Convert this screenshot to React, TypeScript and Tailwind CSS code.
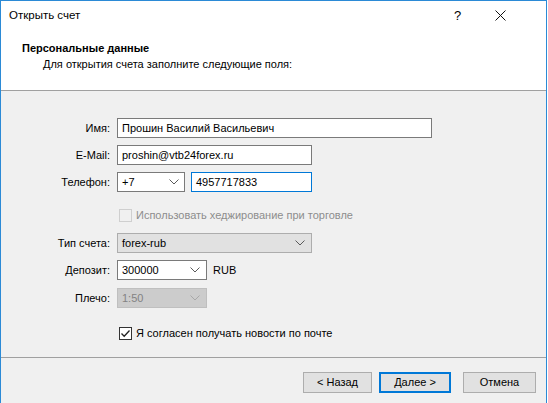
import React from 'react';

const font = { fontFamily: '"Liberation Sans", Arial, sans-serif' };

function Chevron({ color = '#5a5a5a' }: { color?: string }) {
  return (
    <svg width="10" height="6" viewBox="0 0 10 6" className="shrink-0">
      <polyline points="0.5,0.5 5,5 9.5,0.5" fill="none" stroke={color} strokeWidth="1" />
    </svg>
  );
}

function Label({ children }: { children: React.ReactNode }) {
  return <div className="w-[110px] shrink-0 pr-[1px] text-right">{children}</div>;
}

function Check({ checked, disabled }: { checked?: boolean; disabled?: boolean }) {
  return (
    <div
      className={`flex h-[13px] w-[13px] shrink-0 items-center justify-center border ${
        disabled ? 'border-[#cfcfcf] bg-[#f0f0f0]' : 'border-[#333333] bg-white'
      }`}
    >
      {checked && (
        <svg width="11" height="11" viewBox="0 0 11 11">
          <polyline points="1.5,5.5 4.2,8.3 9.5,2.5" fill="none" stroke="#222" strokeWidth="1.3" />
        </svg>
      )}
    </div>
  );
}

export default function App() {
  return (
    <div className="h-[403px] w-[548px] overflow-hidden bg-white text-[11px] text-black" style={font}>
      <div className="flex h-[403px] w-[547px] flex-col border-x border-t border-[#2b8ad6]">
        {/* Title bar */}
        <div className="flex h-[29px] shrink-0 items-center bg-white">
          <div className="flex-1 pl-[8px] pt-[1px] text-[11.5px]">Открыть счет</div>
          <div className="flex w-[43px] items-center justify-center text-[13px] font-light">?</div>
          <div className="flex w-[43px] items-center justify-center">
            <svg width="11" height="11" viewBox="0 0 11 11">
              <line x1="0.5" y1="0.5" x2="10.5" y2="10.5" stroke="#111" strokeWidth="1" />
              <line x1="10.5" y1="0.5" x2="0.5" y2="10.5" stroke="#111" strokeWidth="1" />
            </svg>
          </div>
          <div className="w-[24px]" />
        </div>

        {/* Header */}
        <div className="h-[61px] shrink-0 border-b border-[#a0a0a0] bg-white pl-[21px] pt-[10px]">
          <div className="h-[16px] font-bold leading-[16px]">Персональные данные</div>
          <div className="h-[16px] pl-[21px] leading-[16px]">Для открытия счета заполните следующие поля:</div>
        </div>

        {/* Body */}
        <div className="flex h-[266px] shrink-0 flex-col bg-[#f0f0f0]">
          <div className="mt-[27px] flex h-[20px] items-center gap-[6px]">
            <Label>Имя:</Label>
            <div className="flex h-[20px] w-[315px] items-center border border-[#7a7a7a] bg-white px-[4px]">
              Прошин Василий Васильевич
            </div>
          </div>

          <div className="mt-[7px] flex h-[20px] items-center gap-[6px]">
            <Label>E-Mail:</Label>
            <div className="flex h-[20px] w-[195px] items-center border border-[#7a7a7a] bg-white px-[4px]">
              proshin@vtb24forex.ru
            </div>
          </div>

          <div className="mt-[7px] flex h-[20px] items-center gap-[6px]">
            <Label>Телефон:</Label>
            <div className="flex h-[20px] w-[68px] items-center justify-between border border-[#7a7a7a] bg-white pl-[4px] pr-[5px]">
              <span>+7</span>
              <Chevron />
            </div>
            <div className="flex h-[20px] w-[121px] items-center border border-[#0078d7] bg-white px-[4px]">
              4957717833
            </div>
          </div>

          <div className="mt-[13px] flex h-[20px] items-center gap-[4px] pl-[118px] text-[#8d8d8d]">
            <Check disabled />
            <span>Использовать хеджирование при торговле</span>
          </div>

          <div className="mt-[8px] flex h-[20px] items-center gap-[6px]">
            <Label>Тип счета:</Label>
            <div className="flex h-[20px] w-[195px] items-center justify-between border border-[#adadad] bg-[#e1e1e1] pl-[4px] pr-[6px]">
              <span>forex-rub</span>
              <Chevron />
            </div>
          </div>

          <div className="mt-[7px] flex h-[20px] items-center gap-[6px]">
            <Label>Депозит:</Label>
            <div className="flex h-[20px] w-[90px] items-center justify-between border border-[#7a7a7a] bg-white pl-[4px] pr-[6px]">
              <span>300000</span>
              <Chevron />
            </div>
            <span>RUB</span>
          </div>

          <div className="mt-[8px] flex h-[20px] items-center gap-[6px]">
            <Label>Плечо:</Label>
            <div className="flex h-[20px] w-[90px] items-center justify-between border border-[#bfbfbf] bg-[#cccccc] pl-[4px] pr-[6px] text-[#838383]">
              <span>1:50</span>
              <Chevron color="#a8a8a8" />
            </div>
          </div>

          <div className="mt-[15px] flex h-[20px] items-center gap-[4px] pl-[118px]">
            <Check checked />
            <span>Я согласен получать новости по почте</span>
          </div>
        </div>

        {/* Footer */}
        <div className="flex flex-1 items-start border-t border-[#a0a0a0] bg-[#f0f0f0] pt-[14px]">
          <div className="flex flex-1 justify-end pr-[10px]">
            <button className="flex h-[21px] w-[69px] items-center justify-center border border-[#adadad] bg-[#e1e1e1]">
              &lt; Назад
            </button>
            <button className="ml-[7px] flex h-[21px] w-[72px] items-center justify-center border-2 border-[#0078d7] bg-[#e1e1e1]">
              Далее &gt;
            </button>
            <button className="ml-[12px] flex h-[21px] w-[73px] items-center justify-center border border-[#adadad] bg-[#e1e1e1]">
              Отмена
            </button>
          </div>
        </div>
      </div>
    </div>
  );
}
